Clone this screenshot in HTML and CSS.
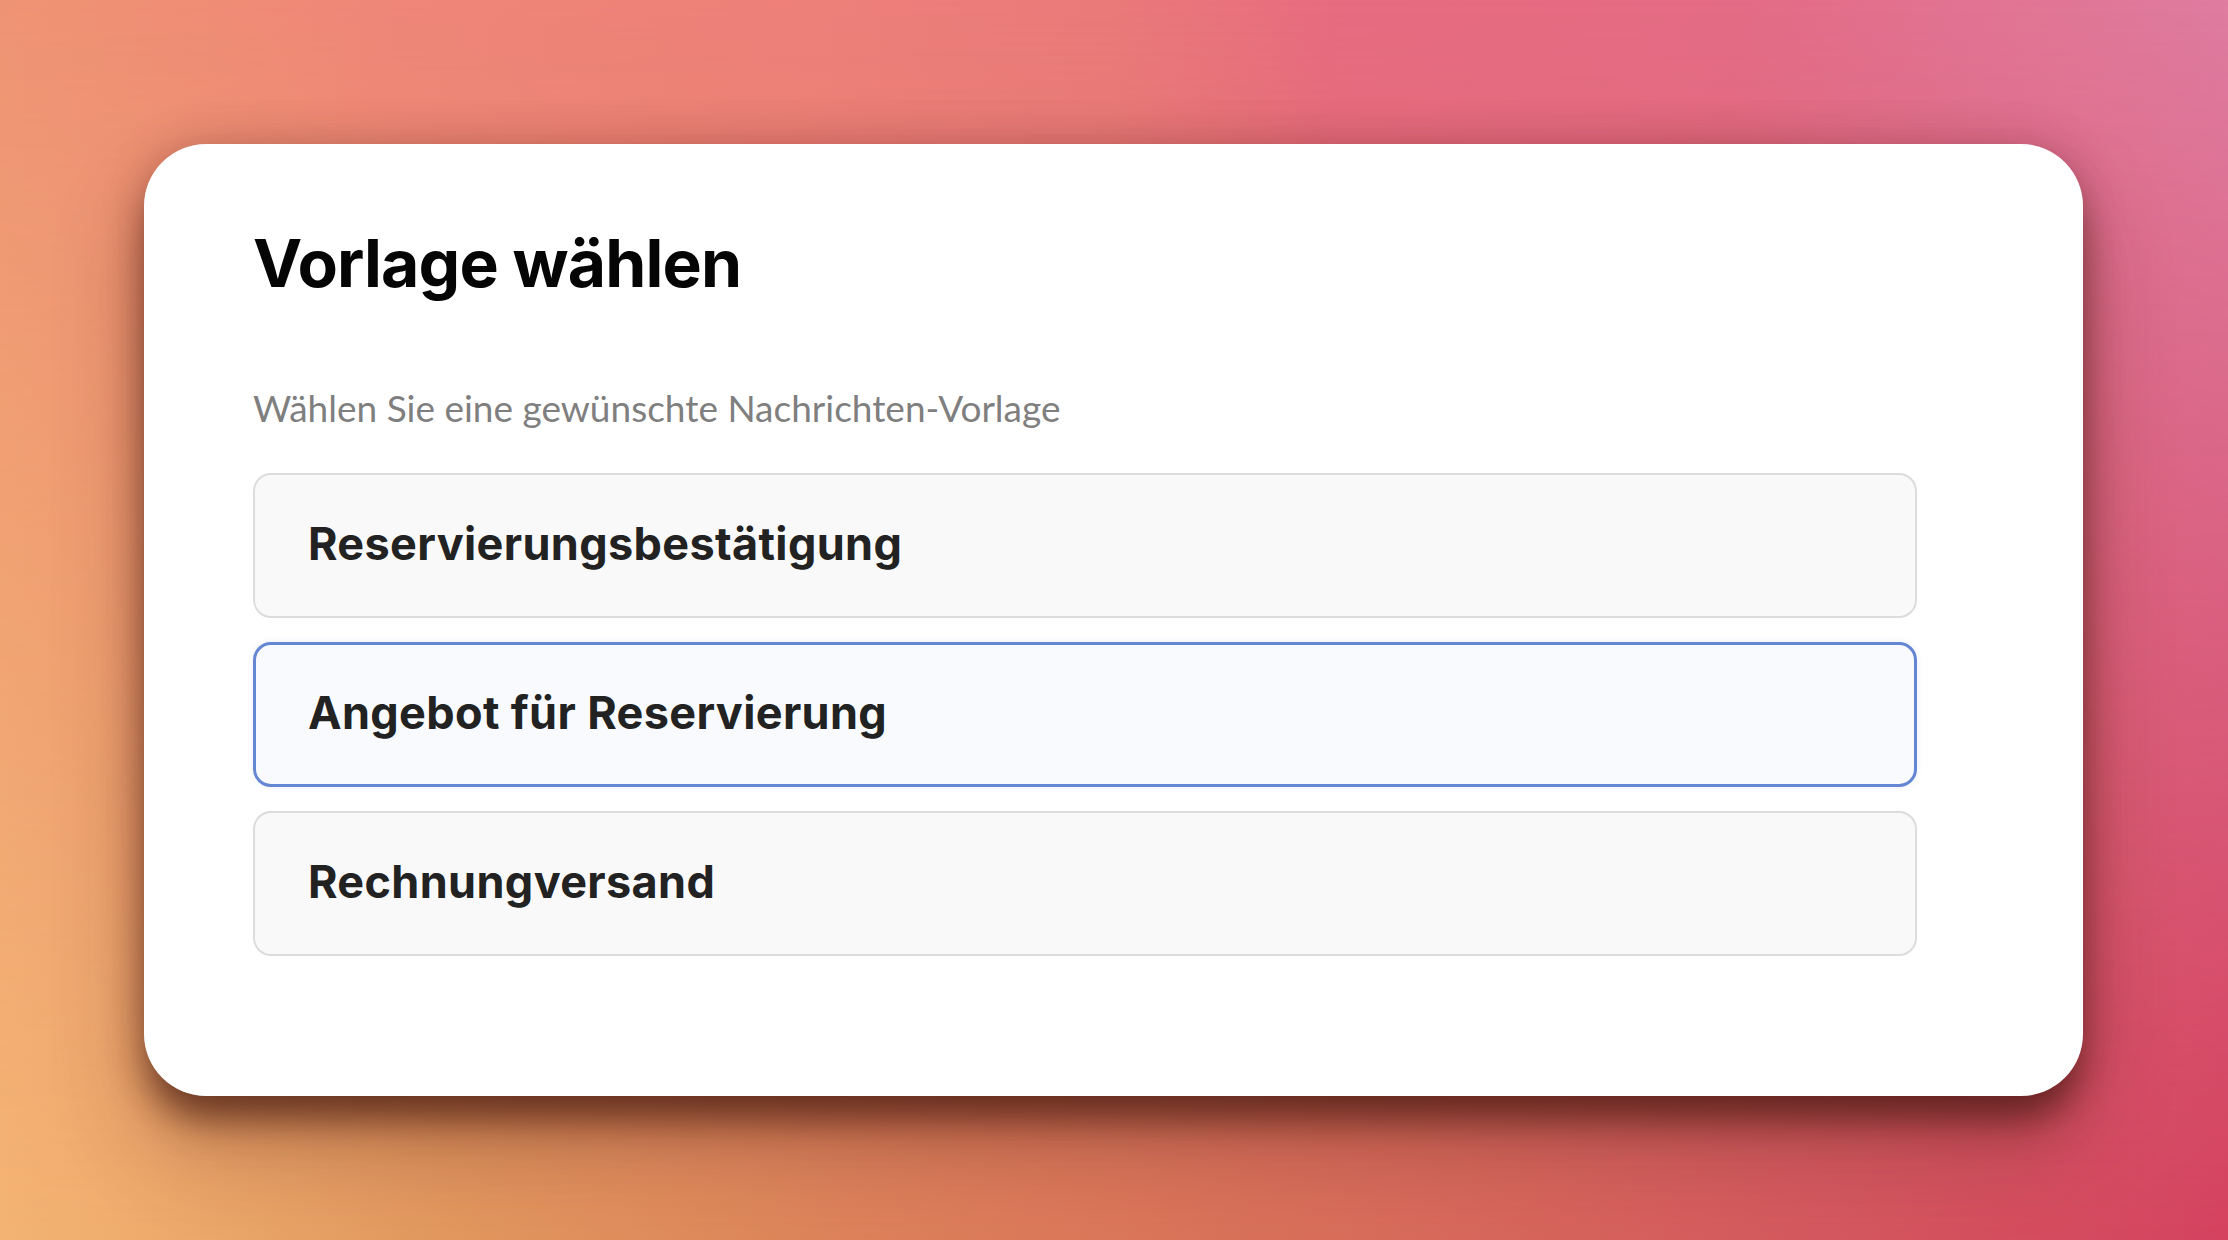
FILE: index.html
```html
<!DOCTYPE html>
<html lang="de">
<head>
<meta charset="utf-8">
<title>Vorlage wählen</title>
<link rel="stylesheet" href="styles.css">
</head>
<body>
<main class="stage">
  <section class="card">
    <h1 class="title">Vorlage wählen</h1>
    <p class="subtitle">Wählen Sie eine gewünschte Nachrichten-Vorlage</p>
    <ul class="options">
      <li class="option">Reservierungsbestätigung</li>
      <li class="option option--selected">Angebot für Reservierung</li>
      <li class="option">Rechnungversand</li>
    </ul>
  </section>
</main>
</body>
</html>
```

FILE: styles.css
```css
html, body {
  margin: 0;
  padding: 0;
}
body {
  width: 2228px;
  height: 1240px;
  overflow: hidden;
  font-family: "Inter", "Liberation Sans", sans-serif;
}
.stage {
  position: relative;
  width: 2228px;
  height: 1240px;
  box-sizing: border-box;
  padding: 144px 0 0 144px;
  background: linear-gradient(90deg, #ef9474 0%, #ef8678 18%, #ee807a 35%, #ea7a7a 50%, #e76c80 60%, #e46c86 78%, #df7ca0 100%);
}
.stage::before {
  content: "";
  position: absolute;
  inset: 0;
  background: linear-gradient(90deg, #f3b473 0%, #e2985e 20%, #dc7e5a 42%, #d86c5a 62%, #d4585e 82%, #d4425e 100%);
  -webkit-mask-image: linear-gradient(to bottom, rgba(0,0,0,0) 0%, rgba(0,0,0,1) 100%);
  mask-image: linear-gradient(to bottom, rgba(0,0,0,0) 0%, rgba(0,0,0,1) 100%);
}
.card {
  position: relative;
  z-index: 1;
  width: 1939px;
  height: 952px;
  box-sizing: border-box;
  padding: 0 166px 0 109px;
  background: #ffffff;
  border-radius: 62px;
  box-shadow:
    0 28px 36px -6px rgba(60, 20, 10, 0.62),
    0 50px 90px rgba(80, 30, 20, 0.3),
    0 0 44px rgba(90, 30, 30, 0.24);
  display: flex;
  flex-direction: column;
}
.title {
  margin: 79px 0 0 0;
  font-size: 66px;
  line-height: 80px;
  font-weight: 700;
  letter-spacing: -0.013em;
  color: #050505;
}
.subtitle {
  margin: 83px 0 0 0;
  font-family: "Lato", "Liberation Sans", sans-serif;
  font-size: 37px;
  line-height: 44px;
  color: #7f7f7f;
}
.options {
  list-style: none;
  margin: 43px 0 0 0;
  padding: 0;
  display: flex;
  flex-direction: column;
  gap: 24px;
}
.option {
  height: 145px;
  box-sizing: border-box;
  display: flex;
  align-items: center;
  padding: 0 0 5px 53px;
  border: 2px solid #dcdcdc;
  border-radius: 18px;
  background: #f9f9fa;
  font-size: 45px;
  font-weight: 700;
  letter-spacing: 0.008em;
  color: #222222;
}
.option--selected {
  border: 3px solid #6586d2;
  padding-left: 52px;
  background: #f8fafd;
  box-shadow: 0 0 6px rgba(106, 138, 208, 0.15);
}
```
